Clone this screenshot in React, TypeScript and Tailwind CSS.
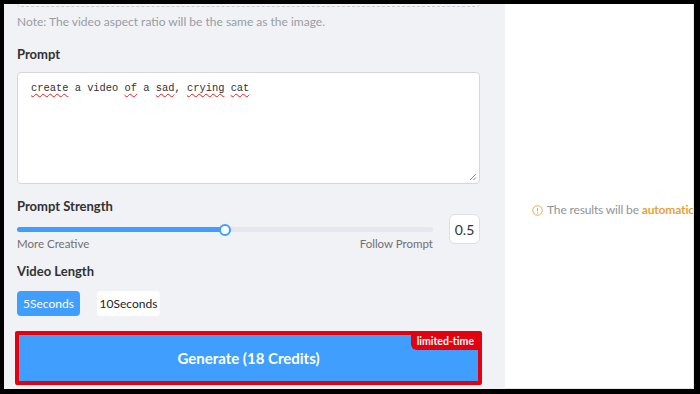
const font = { fontFamily: "Lato, 'Noto Sans', sans-serif" };

function Misspelt({ children }: { children: string }) {
  return <span className="underline decoration-wavy decoration-[#e02020] decoration-1 underline-offset-2">{children}</span>;
}

function PromptBox() {
  return (
    <div className="relative mt-[8px] h-[112px] rounded-[4px] border border-[#d4d7de] bg-white px-[13px] pt-[7px]">
      <p className="text-[10.4px] leading-[16px] text-[#303133]" style={{ fontFamily: "'Liberation Mono', monospace" }}>
        <Misspelt>create</Misspelt> a video <Misspelt>of</Misspelt> a <Misspelt>sad</Misspelt>, <Misspelt>crying</Misspelt>{" "}
        <Misspelt>cat</Misspelt>
      </p>
      {/* resize grip */}
      <svg className="absolute bottom-[2px] right-[2px]" width="8" height="8" viewBox="0 0 8 8">
        <path d="M7 1 L1 7 M7 4.5 L4.5 7" stroke="#8a8a8a" strokeWidth="1" />
      </svg>
    </div>
  );
}

function StrengthSlider({ value }: { value: number }) {
  const pct = value * 100;
  return (
    <div className="mt-[-1px] flex items-start">
      <div className="flex-1 pt-[7px]">
        <div className="relative h-[16px]">
          <div className="absolute left-0 right-0 top-[6px] h-[5px] rounded-full bg-[#e4e7ed]" />
          <div className="absolute left-0 top-[6px] h-[5px] rounded-full bg-[#409eff]" style={{ width: `${pct}%` }} />
          <div
            className="absolute top-[2.5px] h-[12px] w-[12px] -translate-x-1/2 rounded-full border-2 border-[#409eff] bg-white"
            style={{ left: `${pct}%` }}
          />
        </div>
        <div className="flex justify-between text-[11.5px] leading-[14px] text-[#707070]">
          <span>More Creative</span>
          <span>Follow Prompt</span>
        </div>
      </div>
      <div className="ml-[16px] flex h-[30px] w-[31px] items-center justify-center rounded-[6px] border border-[#dcdfe6] bg-white text-[14px] text-[#303133]">
        {value}
      </div>
    </div>
  );
}

export default function App() {
  return (
    <div className="h-[394px] w-[700px] bg-black pb-[5px] pl-[4px] pr-[6px] pt-[4px]" style={font}>
      <div className="flex h-full overflow-hidden">
        <div className="w-[501px] shrink-0 bg-[#f0f2f5] pl-[13px] pr-[25px]">
          {/* cut-off box from above */}
          <div className="-mt-[2px] h-[5px] rounded-b-[4px] border-b border-dashed border-[#c9ccd2] bg-[#f3f4f6]" />
          <p className="mt-[6px] text-[12px] leading-[18px] text-[#9a9ca2]">
            Note: The video aspect ratio will be the same as the image.
          </p>

          <h3 className="mt-[13px] text-[13px] font-bold leading-[20px] text-[#303133]">Prompt</h3>
          <PromptBox />

          <h3 className="mt-[13px] text-[13px] font-bold leading-[18px] text-[#303133]">Prompt Strength</h3>
          <StrengthSlider value={0.5} />

          <h3 className="mt-[10px] text-[13px] font-bold leading-[20px] text-[#303133]">Video Length</h3>
          <div className="mt-[10px] flex gap-[17px]">
            <button type="button" className="flex h-[25px] w-[63px] items-center justify-center rounded-[4px] bg-[#409eff] text-[12px] text-white">
              5Seconds
            </button>
            <button type="button" className="flex h-[25px] w-[63px] items-center justify-center rounded-[4px] bg-white text-[12px] text-[#222]">
              10Seconds
            </button>
          </div>

          <div className="relative -mx-[2px] mt-[15px] h-[54px] rounded-[2px] border-[4px] border-[#e3000f]">
            <button
              type="button"
              className="flex h-full w-full items-center justify-center bg-[#409eff] text-[15px] font-bold text-white"
            >
              Generate (18 Credits)
            </button>
            <span className="absolute -right-[2px] -top-[2px] rounded-bl-[6px] bg-[#e3000f] px-[6px] text-[10.5px] font-bold leading-[17px] text-white">
              limited-time
            </span>
          </div>
        </div>

        <div className="relative flex-1 overflow-hidden border-b border-r border-[#e6e6e6] bg-white">
          <p className="absolute left-[27px] top-[195px] flex items-center whitespace-nowrap text-[12px] leading-[22px] tracking-[-0.15px] text-[#909399]">
            <svg width="11" height="11" viewBox="0 0 12 12" className="mr-[4px]">
              <circle cx="6" cy="6" r="5.2" fill="none" stroke="#e6a23c" strokeWidth="1" />
              <path d="M6 3.2 V6.8" stroke="#e6a23c" strokeWidth="1.1" />
              <circle cx="6" cy="8.6" r="0.6" fill="#e6a23c" />
            </svg>
            The results will be&nbsp;<span className="font-bold text-[#e6a23c]">automatic</span>
          </p>
        </div>
      </div>
    </div>
  );
}
